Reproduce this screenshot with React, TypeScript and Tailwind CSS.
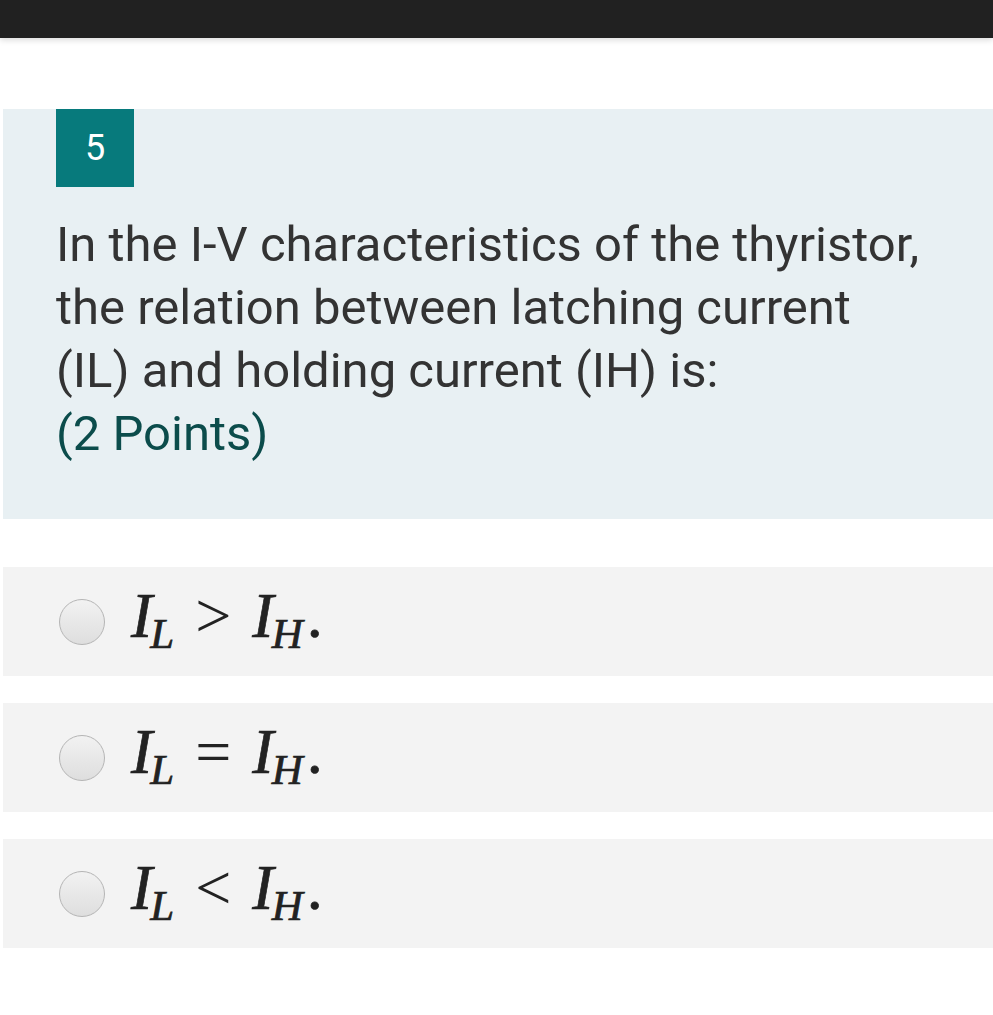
import React from "react";

const options = [">", "=", "<"];

const Radio: React.FC = () => (
  <span className="inline-block w-[46px] h-[46px] rounded-full border border-[#b5b5b5] bg-gradient-to-b from-[#f2f2f2] to-[#dedede] shrink-0" />
);

const MathOption: React.FC<{ op: string }> = ({ op }) => (
  <span
    className="flex items-baseline text-[#222] text-[64px] leading-none relative -top-[6px] [-webkit-text-stroke:0.7px_#222]"
    style={{ fontFamily: '"Liberation Serif", "Times New Roman", serif' }}
  >
    <span className="italic">I</span>
    <span className="italic text-[43px] relative top-[11px] -ml-[2px]">L</span>
    <span className="mx-[21px] [-webkit-text-stroke:0px]">{op}</span>
    <span className="italic">I</span>
    <span className="italic text-[43px] relative top-[11px] -ml-[2px]">H</span>
    <span className="ml-[4px]">.</span>
  </span>
);

export default function App() {
  return (
    <div
      className="w-[993px] min-h-[1015px] bg-white"
      style={{ fontFamily: "Roboto, 'Noto Sans', sans-serif" }}
    >
      <div className="h-[38px] bg-[#212121] shadow-[0_2px_6px_rgba(0,0,0,0.15)]" />
      <div className="mt-[71px] ml-[3px] bg-[#e8f0f3] pl-[53px] pr-4 pb-[54px]">
        <div className="w-[78px] h-[78px] bg-[#077a7c] text-white text-[36px] flex items-center justify-center">
          5
        </div>
        <div className="mt-[26px] text-[49px] leading-[63px] text-[#333]">
          <div>In the I-V characteristics of the thyristor,</div>
          <div>the relation between latching current</div>
          <div>(IL) and holding current (IH) is:</div>
          <div className="text-[#0b4c4b]">(2 Points)</div>
        </div>
      </div>
      <div className="mt-[48px] ml-[3px] flex flex-col gap-[27px]">
        {options.map((op) => (
          <div
            key={op}
            className="h-[109px] bg-[#f3f3f3] flex items-center pl-[56px] gap-[26px]"
          >
            <Radio />
            <MathOption op={op} />
          </div>
        ))}
      </div>
    </div>
  );
}
